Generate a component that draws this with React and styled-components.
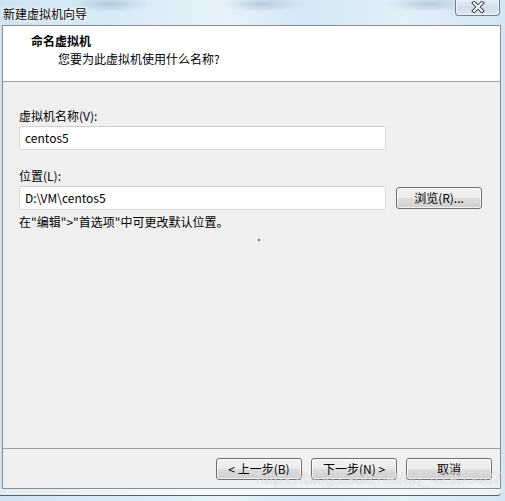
import React from "react";
import styled, { createGlobalStyle } from "styled-components";

const GlobalStyle = createGlobalStyle`
  html, body {
    margin: 0;
    padding: 0;
    background: #d6e8f4;
  }
  * {
    box-sizing: border-box;
  }
`;

const FONT = `"Noto Sans CJK SC", "Noto Sans", sans-serif`;

// Aero glass around the dialog
const Screen = styled.div`
  position: relative;
  width: 505px;
  height: 501px;
  display: flex;
  flex-direction: column;
  font-family: ${FONT};
  font-size: 12px;
  color: #000;
  overflow: hidden;
  background:
    radial-gradient(ellipse 40px 8px at 110px 4px, rgba(110, 140, 170, 0.35), transparent),
    radial-gradient(ellipse 40px 8px at 262px 4px, rgba(110, 140, 170, 0.35), transparent),
    radial-gradient(ellipse 45px 8px at 430px 4px, rgba(110, 140, 170, 0.35), transparent),
    linear-gradient(90deg, #cfe3f1 0%, #d9ebf7 25%, #e6f2fa 45%, #d3e7f4 60%, #e2f0f9 80%, #d2e6f3 100%);
`;

const TitleBar = styled.div`
  position: relative;
  height: 25px;
  flex: none;
  display: flex;
  align-items: center;
  padding: 1px 0 0 3px;
`;

const TitleText = styled.span`
  font-size: 12px;
  color: #000;
  text-shadow: 0 0 6px rgba(255, 255, 255, 0.95), 0 0 3px #fff;
`;

const CloseButton = styled.div`
  position: absolute;
  top: -1px;
  right: 5px;
  width: 45px;
  height: 17px;
  border: 1px solid #6f7e8e;
  border-top: none;
  border-radius: 0 0 4px 4px;
  background: linear-gradient(#e9f1f7, #cfdfeb 55%, #dbe8f2);
  box-shadow: inset 0 0 0 1px rgba(255, 255, 255, 0.6);
  display: flex;
  align-items: center;
  justify-content: center;
`;

const Frame = styled.div`
  flex: none;
  height: 464px;
  margin: 0 4px 0 2px;
  border: 1px solid #8c8d8e;
  display: flex;
  flex-direction: column;
  background: #f0f0f0;
`;

const BottomEdge = styled.div`
  flex: none;
  height: 7px;
  margin: 0 4px 0 0;
  background: linear-gradient(90deg, #e4ecf1, #f6f9fb 40%, #eef3f6);
  border-bottom: 1px solid #5d6166;
  border-radius: 0 0 4px 0;
`;

const Header = styled.div`
  height: 56px;
  flex: none;
  background: #fff;
  border-bottom: 1px solid #a0a0a0;
  padding: 6px 0 0 28px;
  display: flex;
  flex-direction: column;
`;

const HeaderTitle = styled.div`
  font-weight: bold;
  line-height: 18px;
`;

const HeaderSub = styled.div`
  line-height: 18px;
  padding-left: 27px;
`;

const Body = styled.div`
  position: relative;
  flex: 1;
  padding: 26px 0 0 16px;
  display: flex;
  flex-direction: column;
`;

const Label = styled.div`
  line-height: 16px;
  margin-top: ${(p) => p.$gap || 0}px;
  margin-bottom: 2px;
`;

const Row = styled.div`
  display: flex;
  align-items: center;
  gap: 10px;
`;

const TextBox = styled.div`
  width: 367px;
  height: 24px;
  border: 1px solid #dadada;
  border-top-color: #cfcfcf;
  border-radius: 2px;
  background: #fff;
  padding-left: 5px;
  display: flex;
  align-items: center;
  line-height: 16px;
`;

const Hint = styled.div`
  margin-top: 4px;
  line-height: 16px;
`;

const Dot = styled.span`
  position: absolute;
  left: 255px;
  top: 157px;
  width: 2px;
  height: 2px;
  background: #4a62c8;
`;

const Footer = styled.div`
  height: 40px;
  flex: none;
  border-top: 1px solid #a0a0a0;
  display: flex;
  align-items: center;
  justify-content: flex-end;
  gap: 9px;
  padding-right: 8px;
`;

const WinButton = styled.button`
  width: 86px;
  height: 22px;
  padding: 0;
  border: 1px solid #707070;
  border-radius: 3px;
  font-family: ${FONT};
  font-size: 12px;
  color: #000;
  background: linear-gradient(#f2f2f2 0%, #ebebeb 50%, #dddddd 51%, #cfcfcf 100%);
  box-shadow: inset 0 0 0 1px rgba(255, 255, 255, 0.75);
  display: flex;
  align-items: center;
  justify-content: center;
  line-height: 16px;
`;

const Watermark = styled.div`
  position: absolute;
  left: 256px;
  top: 470px;
  font-family: "Liberation Sans", Arial, sans-serif;
  font-size: 16px;
  color: rgba(255, 255, 255, 0.55);
  text-shadow: 0 0 1px rgba(120, 120, 120, 0.35);
  pointer-events: none;
  white-space: nowrap;
`;

function CloseGlyph() {
  return (
    <svg width="14" height="12" viewBox="0 0 14 12">
      <path d="M3 2 L11 10 M11 2 L3 10" stroke="#3b4550" strokeWidth="4" strokeLinecap="square" />
      <path d="M3 2 L11 10 M11 2 L3 10" stroke="#fff" strokeWidth="2" strokeLinecap="square" />
    </svg>
  );
}

export default function App() {
  return (
    <Screen>
      <GlobalStyle />
      <TitleBar>
        <TitleText>新建虚拟机向导</TitleText>
        <CloseButton>
          <CloseGlyph />
        </CloseButton>
      </TitleBar>
      <Frame>
        <Header>
          <HeaderTitle>命名虚拟机</HeaderTitle>
          <HeaderSub>您要为此虚拟机使用什么名称?</HeaderSub>
        </Header>
        <Body>
          <Label>虚拟机名称(V):</Label>
          <TextBox>centos5</TextBox>
          <Label $gap={18}>位置(L):</Label>
          <Row>
            <TextBox>D:\VM\centos5</TextBox>
            <WinButton>浏览(R)...</WinButton>
          </Row>
          <Hint>在"编辑"&gt;"首选项"中可更改默认位置。</Hint>
          <Dot />
        </Body>
        <Footer>
          <WinButton>&lt; 上一步(B)</WinButton>
          <WinButton>下一步(N) &gt;</WinButton>
          <WinButton>取消</WinButton>
        </Footer>
      </Frame>
      <BottomEdge />
      <Watermark>https://blog.csdn.net/qq_42935487</Watermark>
    </Screen>
  );
}
